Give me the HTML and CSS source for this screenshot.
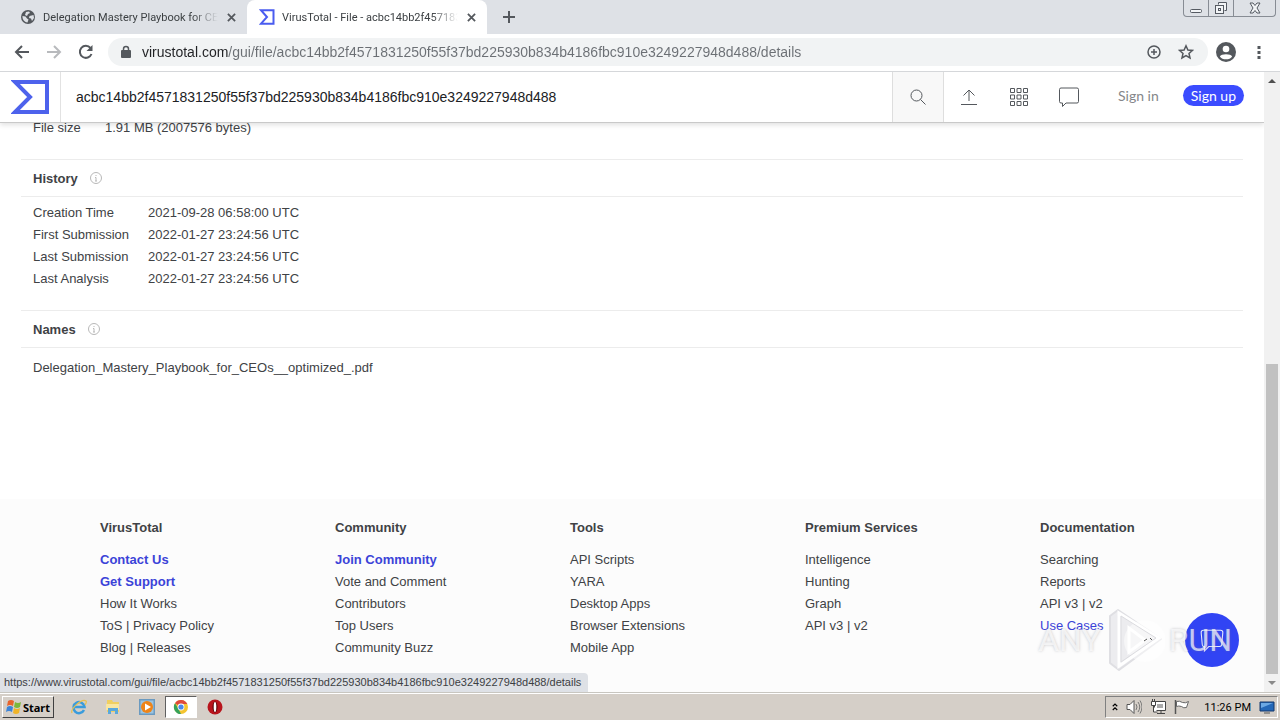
FILE: index.html
```html
<!DOCTYPE html>
<html lang="en">

<head>
    <meta charset="UTF-8">
    <meta name="viewport" content="width=device-width, initial-scale=1.0">
    <title>VirusTotal - File</title>
    <link rel="stylesheet" href="styles.css">
</head>

<body>
    <div class="tabstrip">
        <div class="tab">
            <svg class="favicon" viewBox="0 0 16 16"><circle cx="8" cy="8" r="7" fill="#54585d"/><path d="M2.500 7l3 .5 1.500 2 1.500 1-1 3C4 13 2.200 10 2.500 7zM6 3l3-.5 1 1.500-2 1-1 2-2-1zM9.500 7l4-1 .5 3-2 3-1-2.500-2-.5z" fill="#dee1e6"/></svg>
            <span class="tab-title">Delegation Mastery Playbook for CEO</span>
            <button class="tab-close" aria-label="Close tab"><svg viewBox="0 0 10 10"><path d="M1 1l8 8M9 1l-8 8"/></svg></button>
        </div>
        <div class="tab active">
            <svg class="favicon" viewBox="0 0 16 16"><path d="M2 1.200h12.500v13.500H2L8 8z" fill="none" stroke="#4a5cf0" stroke-width="2"/></svg>
            <span class="tab-title">VirusTotal - File - acbc14bb2f457183</span>
            <button class="tab-close" aria-label="Close tab"><svg viewBox="0 0 10 10"><path d="M1 1l8 8M9 1l-8 8"/></svg></button>
        </div>
        <button class="new-tab" aria-label="New tab"><svg viewBox="0 0 12 12"><path d="M6 0v12M0 6h12"/></svg></button>
        <div class="window-buttons">
            <button aria-label="Minimize"><svg width="14" height="14" viewBox="0 0 14 14"><rect x="1.500" y="8.500" width="11" height="3" rx="1"/></svg></button>
            <button aria-label="Restore"><svg width="14" height="14" viewBox="0 0 14 14"><path d="M4.500 3.500v-2h8v8h-2"/><rect x="1.500" y="4.500" width="8" height="8"/><rect x="4.500" y="7.500" width="2" height="2"/></svg></button>
            <button class="window-close" aria-label="Close"><svg width="14" height="14" viewBox="0 0 14 14"><path d="M2 2h3l2 2.500L9 2h3L9 7l3 5H9L7 9.500 5 12H2l3-5z"/></svg></button>
        </div>
    </div>

    <div class="toolbar">
        <button aria-label="Back"><svg viewBox="0 0 16 16"><path d="M15 8H2M8 2L2 8l6 6"/></svg></button>
        <button class="disabled" aria-label="Forward"><svg viewBox="0 0 16 16"><path d="M1 8h13M8 2l6 6-6 6"/></svg></button>
        <button aria-label="Reload"><svg viewBox="0 0 16 16"><path d="M13.500 10A6 6 0 1 1 12.500 4"/><path d="M14.500 1v6h-6z" fill="#54585d" stroke="none"/></svg></button>
        <div class="omnibox">
            <svg class="lock" viewBox="0 0 10 14"><rect x="0" y="5" width="10" height="8" rx="1" fill="#54585d"/><path d="M2.500 6V4a2.500 2.500 0 0 1 5 0v2" fill="none" stroke="#54585d" stroke-width="1.500"/></svg>
            <input class="url" type="text" aria-label="Address" value="virustotal.com/gui/file/acbc14bb2f4571831250f55f37bd225930b834b4186fbc910e3249227948d488/details">
            <button aria-label="Zoom"><svg viewBox="0 0 16 16"><circle cx="8" cy="8" r="6" stroke-width="1.500"/><path d="M8 5v6M5 8h6" stroke-width="1.500"/></svg></button>
            <button aria-label="Bookmark"><svg viewBox="0 0 16 16"><path d="M8 1.800l1.900 4.200 4.500.4-3.400 3 1 4.500L8 11.500l-4 2.400 1-4.500-3.400-3 4.500-.4z" stroke-width="1.500"/></svg></button>
        </div>
        <button class="profile" aria-label="Profile"><svg viewBox="0 0 18 18"><circle cx="9" cy="9" r="9" fill="#54585d" stroke="none"/><circle cx="9" cy="6.300" r="3" fill="#fff" stroke="none"/><path d="M3.500 13c1-2.500 10-2.500 11 0-2 3.500-9 3.500-11 0z" fill="#fff" stroke="none"/></svg></button>
        <button class="menu" aria-label="Menu"><svg viewBox="0 0 4 16"><path d="M.5 2h3v3h-3zM.5 7h3v3h-3zM.5 12h3v3h-3z" fill="#54585d" stroke="none"/></svg></button>
    </div>

    <div class="viewport">
        <div class="page">
            <header class="vt-header">
                <a class="logo" href="#" aria-label="VirusTotal"><svg viewBox="0 0 38 34"><path d="M4 2h32v30H4l15-15z" fill="none" stroke="#4d62ec" stroke-width="4"/></svg></a>
                <input class="search" type="text" aria-label="Search" value="acbc14bb2f4571831250f55f37bd225930b834b4186fbc910e3249227948d488">
                <button class="search-button" aria-label="Search"><svg viewBox="0 0 16 16"><circle cx="6.500" cy="6.500" r="5.500"/><path d="M10.500 10.500l5 5"/></svg></button>
                <nav class="vt-nav">
                    <button aria-label="Upload"><svg viewBox="0 0 20 20"><path d="M10 14V3M4.500 8.500L10 3l5.500 5.500M2 17.500h16"/></svg></button>
                    <button aria-label="Apps"><svg viewBox="0 0 20 20"><path d="M1.500 1.500h4v4h-4zM8 1.500h4v4H8zM14.500 1.500h4v4h-4zM1.500 8h4v4h-4zM8 8h4v4H8zM14.500 8h4v4h-4zM1.500 14.500h4v4h-4zM8 14.500h4v4H8zM14.500 14.500h4v4h-4z"/></svg></button>
                    <button aria-label="Comments"><svg viewBox="0 0 20 20"><path d="M2 1h16q1.500 0 1.500 1.500v12q0 1.500-1.500 1.500H7l-3.500 3.500V16H2Q.5 16 .5 14.500v-12Q.5 1 2 1z"/></svg></button>
                </nav>
                <a class="sign-in" href="#">Sign in</a>
                <a class="sign-up" href="#">Sign up</a>
            </header>

            <main class="details">
                <table class="props basic">
                    <tr><th>File size</th><td>1.91 MB (2007576 bytes)</td></tr>
                </table>
                <section>
                    <h2>History <svg class="info" viewBox="0 0 12 12"><circle cx="6" cy="6" r="5.500"/><path d="M6 5.500V9M5 9h2M5 5.500h1M6 3v1"/></svg></h2>
                    <table class="props history">
                        <tr><th>Creation Time</th><td>2021-09-28 06:58:00 UTC</td></tr>
                        <tr><th>First Submission</th><td>2022-01-27 23:24:56 UTC</td></tr>
                        <tr><th>Last Submission</th><td>2022-01-27 23:24:56 UTC</td></tr>
                        <tr><th>Last Analysis</th><td>2022-01-27 23:24:56 UTC</td></tr>
                    </table>
                </section>
                <section>
                    <h2>Names <svg class="info" viewBox="0 0 12 12"><circle cx="6" cy="6" r="5.500"/><path d="M6 5.500V9M5 9h2M5 5.500h1M6 3v1"/></svg></h2>
                    <p class="file-name">Delegation_Mastery_Playbook_for_CEOs__optimized_.pdf</p>
                </section>
            </main>

            <footer class="vt-footer">
                <div>
                    <h3>VirusTotal</h3>
                    <ul>
                        <li><a class="strong" href="#">Contact Us</a></li>
                        <li><a class="strong" href="#">Get Support</a></li>
                        <li><a href="#">How It Works</a></li>
                        <li><a href="#">ToS</a> | <a href="#">Privacy Policy</a></li>
                        <li><a href="#">Blog</a> | <a href="#">Releases</a></li>
                    </ul>
                </div>
                <div>
                    <h3>Community</h3>
                    <ul>
                        <li><a class="strong" href="#">Join Community</a></li>
                        <li><a href="#">Vote and Comment</a></li>
                        <li><a href="#">Contributors</a></li>
                        <li><a href="#">Top Users</a></li>
                        <li><a href="#">Community Buzz</a></li>
                    </ul>
                </div>
                <div>
                    <h3>Tools</h3>
                    <ul>
                        <li><a href="#">API Scripts</a></li>
                        <li><a href="#">YARA</a></li>
                        <li><a href="#">Desktop Apps</a></li>
                        <li><a href="#">Browser Extensions</a></li>
                        <li><a href="#">Mobile App</a></li>
                    </ul>
                </div>
                <div>
                    <h3>Premium Services</h3>
                    <ul>
                        <li><a href="#">Intelligence</a></li>
                        <li><a href="#">Hunting</a></li>
                        <li><a href="#">Graph</a></li>
                        <li><a href="#">API v3</a> | <a href="#">v2</a></li>
                    </ul>
                </div>
                <div>
                    <h3>Documentation</h3>
                    <ul>
                        <li><a href="#">Searching</a></li>
                        <li><a href="#">Reports</a></li>
                        <li><a href="#">API v3</a> | <a href="#">v2</a></li>
                        <li><a class="hover" href="#">Use Cases</a></li>
                    </ul>
                </div>
            </footer>
        </div>

        <div class="scrollbar">
            <svg viewBox="0 0 8 4"><path d="M0 4l4-4 4 4z" fill="#505050"/></svg>
            <div class="scroll-track"><div class="scroll-thumb"></div></div>
            <svg viewBox="0 0 8 4"><path d="M0 0l4 4 4-4z" fill="#8a8a8a"/></svg>
        </div>

        <button class="chat" aria-label="Chat"><svg viewBox="0 0 24 24"><path d="M4 3h16q2 0 2 2l-1 11q0 2-2 2H9l-4 4v-4H4q-1 0-1-2L2 5q0-2 2-2z"/></svg></button>
        <div class="watermark">
            <span>ANY</span>
            <svg viewBox="0 0 60 64"><path d="M5 8l8-6 43 29-42 31-9-7z" fill="#ececef" stroke="#dfdfe3" stroke-width="2" stroke-linejoin="round"/><circle cx="40" cy="33" r="21" fill="#fff" opacity=".5"/><path d="M14 5l40 25-40 28zM24 20v24l16-12z" fill="none" stroke="#fff" stroke-width="3"/><path d="M16 8l35 22-35 24z" fill="none" stroke="#dcdce0"/><path d="M39 33l3-2M45 30l2 2" stroke="#555"/></svg>
            <span>RUN</span>
        </div>
        <div class="status">https://www.virustotal.com/gui/file/acbc14bb2f4571831250f55f37bd225930b834b4186fbc910e3249227948d488/details</div>
    </div>

    <div class="taskbar">
        <button class="start"><svg viewBox="0 0 16 16"><path d="M2 2q3-2 6 0L7 7Q4 5 1 7z" fill="#e8642c"/><path d="M9 3q3 2 6 0l-1 5q-3 2-6 0z" fill="#7cb83c"/><path d="M1 8q3-2 6 0l-1 5q-3-2-6 0z" fill="#3c84d8"/><path d="M8 9q3 2 6 0l-1 5q-3 2-6 0z" fill="#f0b428"/></svg>Start</button>
        <button class="app" aria-label="Internet Explorer"><svg viewBox="0 0 16 16"><path d="M13 11a5.500 5.500 0 1 1 .5-3H4" fill="none" stroke="#3a9cdc" stroke-width="2.500"/><path d="M1 14C-1 10 11-1 15 2q1 1-1 4" fill="none" stroke="#e8c050" stroke-width="1.300"/></svg></button>
        <button class="app" aria-label="Explorer"><svg viewBox="0 0 16 16"><path d="M2 1h5l1 2h6v10H2z" fill="#f0cf60"/><path d="M1 5h13v6H1z" fill="#f9e6a0"/><path d="M3 15V9h10v6h-3v-3H6v3z" fill="#5aa8dc"/></svg></button>
        <button class="app" aria-label="Media Player"><svg viewBox="0 0 16 16"><path d="M.5.5h15v15H.5z" fill="#9cc4e0" stroke="#6b9ac0"/><circle cx="8" cy="8" r="6" fill="#ee8418"/><path d="M6 4.500L12 8l-6 3.500z" fill="#fff"/></svg></button>
        <button class="app running" aria-label="Chrome"><svg viewBox="0 0 16 16"><circle cx="8" cy="8" r="7" fill="#f4c430"/><path d="M8 8L2 4.200A7 7 0 0 1 14.300 5H8z" fill="#df4a3c"/><path d="M2 4.200L5.500 10 8 15A7 7 0 0 1 2 4.200z" fill="#36a25a"/><circle cx="8" cy="8" r="3.400" fill="#fff"/><circle cx="8" cy="8" r="2.600" fill="#4a88ec"/></svg></button>
        <button class="app" aria-label="Opera"><svg viewBox="0 0 16 16"><circle cx="8" cy="8" r="7.500" fill="#b8141c"/><ellipse cx="8" cy="8" rx="2.500" ry="5.500" fill="#5c080c"/><ellipse cx="8" cy="8" rx="1.300" ry="5" fill="#fff"/></svg></button>
        <div class="tray">
            <svg class="chevrons" viewBox="0 0 8 10"><path d="M1 4l3-3 3 3M1 9l3-3 3 3" fill="none" stroke="#000" stroke-width="1.500"/></svg>
            <svg viewBox="0 0 16 16"><path d="M1 5.500h3l4-4v13l-4-4H1z" fill="#fff" stroke="#555"/><path d="M10 5q2 3 0 6M12 3q3.500 5 0 10M14 1.500q4 6.500 0 13" fill="none" stroke="#777"/></svg>
            <svg viewBox="0 0 16 16"><path d="M4.500 2.500h11v9h-11zM7 14.500h8M11 12v2" fill="#fff" stroke="#444"/><path d="M7 5h6v4H7z" fill="#aaa"/><path d="M1.500 2.500h4v4h-4zM2.500 0v2M4.500 0v2M3.500 7v6h4" fill="#fff" stroke="#444"/></svg>
            <svg viewBox="0 0 16 16"><path d="M1.500 1v14" stroke="#555" stroke-width="1.500"/><path d="M2.500 2.500q3-1 6 1 3 1 6-1l-2 6q-3 1-5-1-3-1-5 0z" fill="#fff" stroke="#666"/></svg>
            <span class="clock">11:26 PM</span>
            <svg class="desktop" viewBox="0 0 16 16"><path d="M1 3h14v9H1z" fill="#2468b8" stroke="#14386c"/><path d="M2 4h12L2 9z" fill="#6ba8e4"/><path d="M5 14h6" stroke="#555"/></svg>
        </div>
    </div>
</body>

</html>
```
FILE: styles.css
```css
* {
    box-sizing: border-box;
}

body {
    margin: 0;
    height: 100vh;
    display: flex;
    flex-direction: column;
    overflow: hidden;
    font-family: "Liberation Sans", sans-serif;
    font-size: 13px;
    color: #404245;
    background-color: #fff;
}

button {
    padding: 0;
    border: none;
    background: none;
    display: flex;
    align-items: center;
    justify-content: center;
    flex-shrink: 0;
}

button svg {
    fill: none;
    stroke: #54585d;
    stroke-width: 2;
}

input {
    border: none;
    outline: none;
    padding: 0;
    background: none;
    min-width: 0;
}

a {
    color: inherit;
    text-decoration: none;
}

svg {
    display: block;
    flex-shrink: 0;
}

/* Browser tabs */
.tabstrip {
    height: 34px;
    flex-shrink: 0;
    display: flex;
    background-color: #dee1e6;
    padding-left: 7px;
    font-family: Roboto, sans-serif;
    font-size: 11px;
}

.tab {
    width: 240px;
    display: flex;
    align-items: center;
    padding: 0 10px 0 13px;
    gap: 7px;
    color: #3c4043;
}

.tab.active {
    padding-left: 12px;
    background-color: #fff;
    border-radius: 8px 8px 0 0;
}

.favicon {
    width: 16px;
    height: 16px;
}

.tab-title {
    flex: 1;
    overflow: hidden;
    white-space: nowrap;
    mask-image: linear-gradient(to right, #000 85%, transparent);
}

.tab-close svg {
    width: 9px;
    height: 9px;
}

.tab-close {
    width: 12px;
    height: 16px;
}

.new-tab {
    width: 44px;
}

.new-tab svg {
    width: 12px;
    height: 12px;
}

.window-buttons {
    margin-left: auto;
    margin-right: 4px;
    height: 17px;
    display: flex;
    border: 1px solid #878c94;
    border-top: none;
    border-radius: 0 0 4px 4px;
}

.window-buttons button {
    width: 25px;
    border-right: 1px solid #878c94;
}

.window-buttons .window-close {
    width: 41px;
    border-right: none;
}

.window-buttons svg {
    stroke: #555a62;
    stroke-width: 1;
    fill: #f2f4f6;
}

/* Address bar */
.toolbar {
    height: 38px;
    flex-shrink: 0;
    display: flex;
    align-items: center;
    padding: 0 14px 2px;
    gap: 16px;
    border-bottom: 1px solid #d5d7da;
}

.toolbar svg {
    width: 16px;
    height: 16px;
}

.toolbar .disabled svg {
    stroke: #b8babd;
}

.omnibox {
    flex: 1;
    height: 28px;
    display: flex;
    align-items: center;
    gap: 16px;
    padding: 0 14px 0 13px;
    margin-left: -2px;
    background-color: #f1f3f4;
    border-radius: 14px;
}

.omnibox .lock {
    width: 10px;
    height: 14px;
}

.url {
    flex: 1;
    height: 20px;
    margin-left: -5px;
    font-family: "Liberation Sans", sans-serif;
    font-size: 14px;
    color: #5f6368;
    background-image: linear-gradient(to right, #202124 86px, #6b6f74 86px);
    background-clip: text;
    -webkit-text-fill-color: transparent;
}

.toolbar .profile {
    margin-left: -8px;
}

.toolbar .profile svg {
    width: 20px;
    height: 20px;
}

.toolbar .menu {
    width: 14px;
}

/* Page */
.viewport {
    flex: 1;
    min-height: 0;
    position: relative;
    display: flex;
}

.page {
    flex: 1;
    min-width: 0;
    overflow: hidden;
    display: flex;
    flex-direction: column;
}

.vt-header {
    position: relative;
    z-index: 1;
    height: 51px;
    flex-shrink: 0;
    display: flex;
    align-items: center;
    background-color: #fff;
    border-bottom: 1px solid #c9c9c9;
    box-shadow: 0 2px 5px rgba(0, 0, 0, 0.12);
}

.logo {
    width: 61px;
    height: 100%;
    display: flex;
    align-items: center;
    justify-content: center;
    border-right: 1px solid #e2e2e2;
}

.logo svg {
    width: 38px;
    height: 34px;
}

.search {
    flex: 1;
    height: 100%;
    padding: 0 15px;
    font-family: "Liberation Sans", sans-serif;
    font-size: 14px;
    color: #202124;
}

.search-button {
    width: 52px;
    height: 100%;
    background-color: #f8f8f8;
    border: 1px solid #dedede;
    border-width: 0 1px;
}

.search-button svg {
    width: 16px;
    height: 16px;
    stroke-width: 1;
}

.vt-nav {
    display: flex;
}

.vt-nav button {
    width: 50px;
}

.vt-nav svg {
    width: 20px;
    height: 20px;
    stroke-width: 1;
}

.sign-in,
.sign-up {
    height: 21px;
    margin-bottom: 3px;
    line-height: 21px;
    font-family: Lato, sans-serif;
    font-size: 14px;
}

.sign-in {
    margin-left: 24px;
    margin-right: 24px;
    color: #85878a;
}

.sign-up {
    padding: 0 8px;
    margin-right: 20px;
    border-radius: 11px;
    color: #fff;
    background-color: #3b4cff;
}

.details {
    flex: 1;
    padding: 0 21px;
    margin-top: -7px;
}

.props {
    border-collapse: collapse;
    margin: 0 12px;
}

.props th,
.props td {
    height: 22px;
    padding: 0;
    text-align: left;
    font-weight: normal;
}

.basic {
    margin-bottom: 21px;
}

.basic th {
    width: 72px;
}

.history {
    margin-bottom: 21px;
}

.history th {
    width: 115px;
}

.details section {
    border-top: 1px solid #ececec;
}

.details h2 {
    height: 37px;
    margin: 0 0 4px;
    padding: 0 12px;
    display: flex;
    align-items: center;
    gap: 12px;
    font-size: 13px;
    font-weight: bold;
    border-bottom: 1px solid #ececec;
}

.info {
    width: 12px;
    height: 12px;
    fill: none;
    stroke: #b8b8b8;
}

.file-name {
    margin: 0;
    padding: 6px 12px;
    line-height: 20px;
}

.vt-footer {
    display: grid;
    grid-template-columns: repeat(5, 1fr);
    gap: 111px;
    padding: 18px 100px 33px;
    line-height: 22px;
    white-space: nowrap;
    background-color: #fcfcfc;
}

.vt-footer h3 {
    margin: 0 0 10px;
    font-size: 13px;
    line-height: 22px;
}

.vt-footer ul {
    margin: 0;
    padding: 0;
    list-style: none;
}

.vt-footer .strong {
    font-weight: bold;
    color: #3b43d8;
}

.vt-footer .hover {
    color: #3b43d8;
}

.scrollbar {
    width: 16px;
    display: flex;
    flex-direction: column;
    align-items: center;
    padding: 7px 0;
    gap: 7px;
    background-color: #f1f1f1;
}

.scrollbar svg {
    width: 8px;
    height: 4px;
}

.scroll-track {
    flex: 1;
    width: 12px;
    display: flex;
    align-items: flex-end;
}

.scroll-thumb {
    width: 100%;
    height: 53%;
    background-color: #c1c1c1;
}

.chat {
    position: absolute;
    right: 41px;
    bottom: 25px;
    width: 54px;
    height: 54px;
    border-radius: 50%;
    background-color: #3144f4;
}

.chat svg {
    width: 26px;
    height: 26px;
    stroke: #e4e8ff;
    stroke-width: 1;
}

.watermark {
    position: absolute;
    right: 48px;
    bottom: 20px;
    display: flex;
    align-items: center;
    gap: 4px;
    font-family: Roboto, sans-serif;
    font-size: 32px;
    color: rgba(255, 255, 255, 0.7);
    text-shadow: 0 0 3px rgba(120, 120, 130, 0.4);
    pointer-events: none;
}

.watermark svg {
    width: 60px;
    height: 64px;
}

.status {
    position: absolute;
    left: 0;
    bottom: 0;
    height: 19px;
    padding: 0 7px 0 4px;
    line-height: 19px;
    font-family: "Liberation Sans", sans-serif;
    font-size: 11px;
    color: #3c4043;
    background-color: #dee1e6;
    border-radius: 0 4px 0 0;
}

/* Windows taskbar */
.taskbar {
    height: 28px;
    flex-shrink: 0;
    display: flex;
    align-items: center;
    padding: 1px 2px 0;
    border-top: 1px solid #c8c6c0;
    background-color: #d5cfc8;
    box-shadow: inset 0 1px #fff;
    font-family: Roboto, sans-serif;
    font-size: 11px;
    color: #000;
}

.taskbar svg {
    width: 16px;
    height: 16px;
    stroke: none;
}

.start {
    width: 52px;
    height: 22px;
    gap: 1px;
    margin-right: 9px;
    font-family: "Noto Sans", sans-serif;
    font-size: 11px;
    font-weight: bold;
    color: #000;
    border: 1px solid;
    border-color: #fff #404040 #404040 #fff;
}

.app {
    width: 32px;
    height: 22px;
    margin-right: 2px;
}

.app.running {
    background-color: #fff;
    border: 1px solid;
    border-color: #606060 #fff #fff #606060;
}

.tray {
    height: 22px;
    margin-left: auto;
    display: flex;
    align-items: center;
    padding: 0 2px 0 6px;
    gap: 8px;
    border: 1px solid;
    border-color: #808080 #fff #fff #808080;
}

.taskbar .chevrons {
    width: 6px;
    height: 10px;
}

.clock {
    margin-left: 6px;
}
```
